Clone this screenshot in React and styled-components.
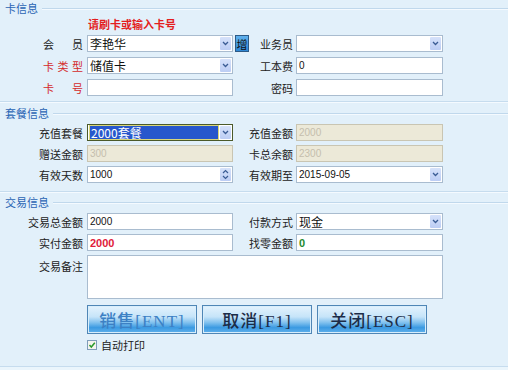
import React from "react";
import styled, { createGlobalStyle } from "styled-components";

const GlobalStyle = createGlobalStyle`
  html, body {
    margin: 0;
    padding: 0;
    background: #e2f0fa;
  }
  body {
    font-family: "Noto Sans CJK SC", "Liberation Sans", sans-serif;
  }
`;

const Window = styled.div`
  width: 508px;
  height: 370px;
  background: #e2f0fa;
  display: flex;
  flex-direction: column;
  overflow: hidden;
  box-sizing: border-box;
`;

const Group = styled.div`
  padding: ${(p) => p.$pad || "1px 0 5px 0"};
  border-bottom: ${(p) => (p.$last ? "none" : "1px solid #c6dcee")};
  box-shadow: ${(p) => (p.$last ? "none" : "0 1px 0 #f4faff")};
  flex: ${(p) => (p.$last ? 1 : "none")};
  display: flex;
  flex-direction: column;
`;

const Legend = styled.div`
  display: flex;
  align-items: center;
  height: 14px;
  padding-left: 5px;
  font-size: 11px;
  color: #2a64b4;
  &::after {
    content: "";
    flex: 1;
    height: 1px;
    margin-left: 4px;
    background: #c0d8ec;
    box-shadow: 0 1px 0 #f4faff;
  }
`;

const Hint = styled.div`
  margin: 2px 0 0 88px;
  height: 14px;
  line-height: 14px;
  font-size: 11px;
  font-weight: bold;
  color: #e41e1e;
`;

const FormGrid = styled.div`
  margin-top: 4px;
  display: grid;
  grid-template-columns: 87px 147px 14px 48px 147px;
  grid-auto-rows: auto;
  row-gap: ${(p) => p.$gap || 4}px;
`;

const Label = styled.div`
  display: flex;
  align-items: ${(p) => (p.$top ? "flex-start" : "center")};
  justify-content: flex-end;
  padding-right: ${(p) => (p.$right ? 3 : 4)}px;
  padding-top: ${(p) => (p.$top ? 3 : 0)}px;
  font-size: 11px;
  color: ${(p) => (p.$red ? "#d42a2a" : "#222")};
  white-space: nowrap;
`;

const Spread = styled.span`
  display: inline-flex;
  justify-content: space-between;
  width: 40px;
`;

const Field = styled.div`
  position: relative;
  box-sizing: border-box;
  width: ${(p) => p.$w || 146}px;
  height: ${(p) => p.$h || 17}px;
  border: 1px solid ${(p) => (p.$off ? "#c9c5b2" : p.$edge || "#a9bccf")};
  background: ${(p) => (p.$off ? "#ece9d8" : "#fff")};
  display: flex;
  align-items: ${(p) => (p.$h ? "flex-start" : "center")};
  padding-left: 2px;
  font-size: ${(p) => (p.$big ? 12 : p.$bold ? 11 : 10)}px;
  font-family: ${(p) =>
    p.$big
      ? `"Noto Sans CJK SC", sans-serif`
      : `"Liberation Sans", "Noto Sans CJK SC", sans-serif`};
  font-weight: ${(p) => (p.$bold ? "bold" : "normal")};
  color: ${(p) => (p.$off ? "#c4bead" : p.$color || "#111")};
  grid-column: ${(p) => p.$span || "auto"};
`;

const Arrow = styled.div`
  position: absolute;
  right: 1px;
  top: 1px;
  bottom: 1px;
  width: 11px;
  background: linear-gradient(#d6e2fa, #bccdf4);
  border-radius: 1px;
  display: flex;
  align-items: center;
  justify-content: center;
`;

const Picked = styled.span`
  margin: 1px 14px 1px 0;
  flex: 1;
  align-self: stretch;
  display: flex;
  align-items: center;
  padding-left: 1px;
  background: #2757cc;
  color: #fff;
  outline: 1px solid #d9d67a;
`;

const AddButton = styled.div`
  box-sizing: border-box;
  width: 14px;
  height: 17px;
  margin-left: 1px;
  border: 1px solid #2c5a86;
  background: linear-gradient(#5fb0ec, #2d86d4);
  font-size: 11px;
  color: #111;
  display: flex;
  align-items: center;
  justify-content: center;
`;

const ButtonRow = styled.div`
  margin: 6px 0 0 87px;
  display: flex;
  gap: 5px;
`;

const ActionButton = styled.div`
  box-sizing: border-box;
  width: 110px;
  height: 29px;
  border: 1px solid #4f86b6;
  box-shadow: inset 0 0 0 1px #d8eefc;
  background: linear-gradient(
    #e4f3fd 0%,
    #c6e4f9 40%,
    #7fc0ee 62%,
    #3b9ae2 80%,
    #62b2ec 100%
  );
  display: flex;
  align-items: center;
  justify-content: center;
  font-family: "Liberation Serif", "Noto Sans CJK SC", serif;
  font-size: 17px;
  font-weight: 500;
  letter-spacing: 1px;
  color: ${(p) => (p.$active ? "#3c80c4" : "#1c2c48")};
`;

const CheckRow = styled.label`
  margin: 4px 0 0 87px;
  height: 14px;
  display: flex;
  align-items: center;
  gap: 4px;
  font-size: 11px;
  color: #222;
`;

const Box = styled.span`
  box-sizing: border-box;
  width: 10px;
  height: 10px;
  border: 1px solid #7f9db9;
  background: #f4f4ee;
  display: flex;
  align-items: center;
  justify-content: center;
`;

const Footer = styled.div`
  margin-top: auto;
  height: 3px;
  border-top: 1px solid #c6dcee;
  background: #eaf5fc;
`;

const Chevron = () => (
  <svg width="7" height="5" viewBox="0 0 7 5">
    <path d="M1 1 L3.5 3.5 L6 1" fill="none" stroke="#3a5c94" strokeWidth="1.3" />
  </svg>
);

const UpDown = () => (
  <svg width="7" height="11" viewBox="0 0 7 11">
    <path d="M1 4 L3.5 1.5 L6 4" fill="none" stroke="#3a5c94" strokeWidth="1.2" />
    <path d="M1 7 L3.5 9.5 L6 7" fill="none" stroke="#3a5c94" strokeWidth="1.2" />
  </svg>
);

const Select = ({ children, ...rest }) => (
  <Field {...rest}>
    {children}
    <Arrow>
      <Chevron />
    </Arrow>
  </Field>
);

const Gap = styled.div``;

const App = () => {
  return (
    <Window>
      <GlobalStyle />
      <Group>
        <Legend>卡信息</Legend>
        <Hint>请刷卡或输入卡号</Hint>
        <FormGrid $gap={5}>
          <Label>
            <Spread>
              <span>会</span>
              <span>员</span>
            </Spread>
          </Label>
          <Select $big>李艳华</Select>
          <AddButton>增</AddButton>
          <Label $right>业务员</Label>
          <Select $w={147} />

          <Label $red>
            <Spread>
              <span>卡</span>
              <span>类</span>
              <span>型</span>
            </Spread>
          </Label>
          <Select $big>储值卡</Select>
          <Gap />
          <Label $right>工本费</Label>
          <Field $w={147}>0</Field>

          <Label $red>
            <Spread>
              <span>卡</span>
              <span>号</span>
            </Spread>
          </Label>
          <Field />
          <Gap />
          <Label $right>密码</Label>
          <Field $w={147} />
        </FormGrid>
      </Group>

      <Group $pad="4px 0 8px 0">
        <Legend>套餐信息</Legend>
        <FormGrid>
          <Label>充值套餐</Label>
          <Select $big $edge="#4b5a2a">
            <Picked>2000套餐</Picked>
          </Select>
          <Gap />
          <Label $right>充值金额</Label>
          <Field $w={147} $off>
            2000
          </Field>

          <Label>赠送金额</Label>
          <Field $off>300</Field>
          <Gap />
          <Label $right>卡总余额</Label>
          <Field $w={147} $off>
            2300
          </Field>

          <Label>有效天数</Label>
          <Field>
            1000
            <Arrow>
              <UpDown />
            </Arrow>
          </Field>
          <Gap />
          <Label $right>有效期至</Label>
          <Select $w={147}>2015-09-05</Select>
        </FormGrid>
      </Group>

      <Group $pad="3px 0 0 0" $last>
        <Legend>交易信息</Legend>
        <FormGrid>
          <Label>交易总金额</Label>
          <Field>2000</Field>
          <Gap />
          <Label $right>付款方式</Label>
          <Select $w={147} $big>
            现金
          </Select>

          <Label>实付金额</Label>
          <Field $bold $color="#e0203a">
            2000
          </Field>
          <Gap />
          <Label $right>找零金额</Label>
          <Field $w={147} $bold $color="#1f8a2e">
            0
          </Field>

          <Label $top>交易备注</Label>
          <Field $w={356} $h={44} $span="2 / 6" />
        </FormGrid>
        <ButtonRow>
          <ActionButton $active>销售[ENT]</ActionButton>
          <ActionButton>取消[F1]</ActionButton>
          <ActionButton>关闭[ESC]</ActionButton>
        </ButtonRow>
        <CheckRow>
          <Box>
            <svg width="8" height="8" viewBox="0 0 8 8">
              <path d="M1.5 4 L3.3 6 L6.8 1.8" fill="none" stroke="#2a9a2a" strokeWidth="1.5" />
            </svg>
          </Box>
          自动打印
        </CheckRow>
        <Footer />
      </Group>
    </Window>
  );
};

export default App;
